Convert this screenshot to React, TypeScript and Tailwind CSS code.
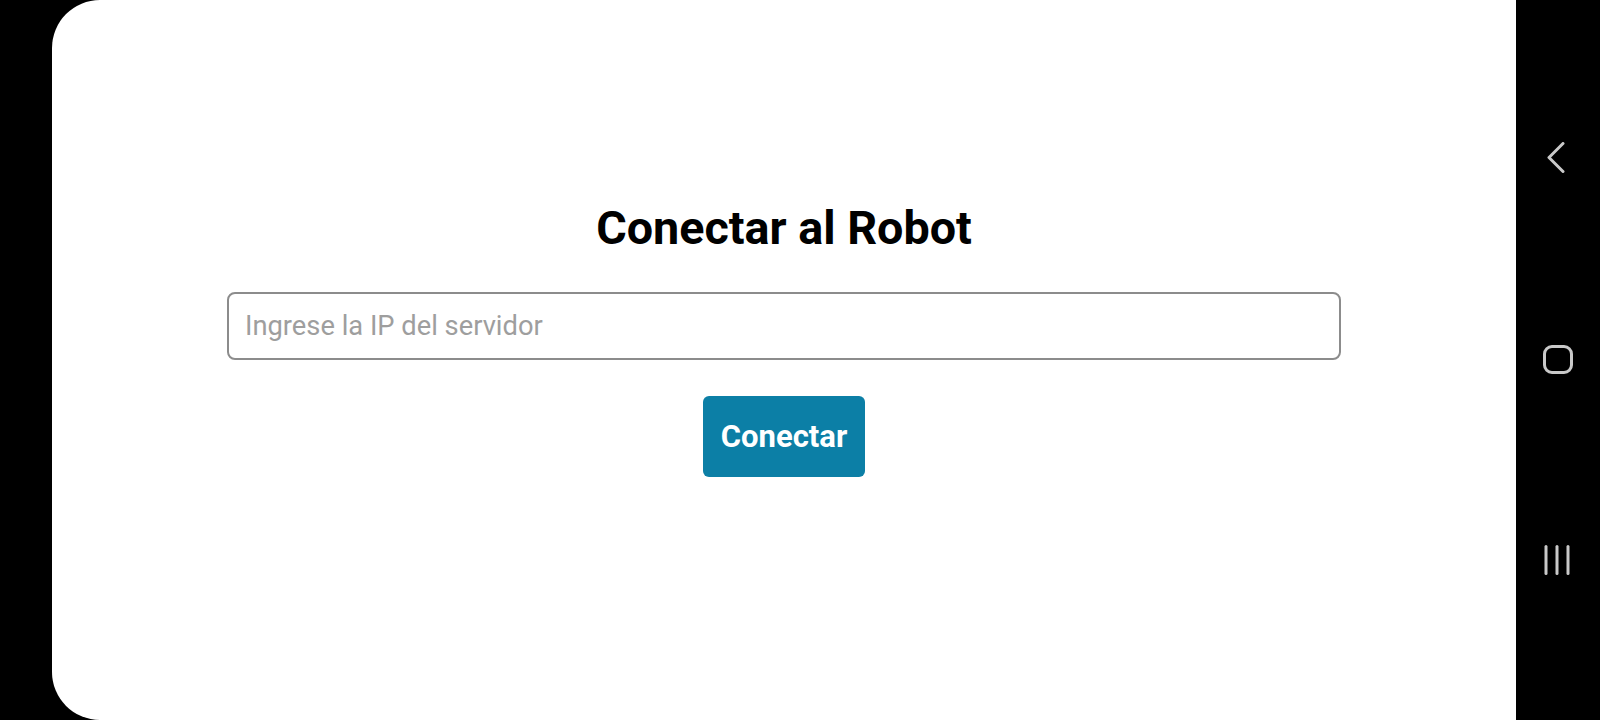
const NavBar = () => {
  return (
    <div className="w-[84px] h-full bg-black flex flex-col items-center pt-[142px]">
      <svg width="18" height="31" viewBox="0 0 18 31" fill="none" className="-ml-[4px]">
        <polyline points="16,1.5 2,15.5 16,29.5" stroke="#c9c9c9" strokeWidth="3" strokeLinecap="round" strokeLinejoin="round" />
      </svg>
      <div className="mt-[172px] w-[30px] h-[29px] border-[3px] border-[#c9c9c9] rounded-[9px]"></div>
      <svg width="28" height="30" viewBox="0 0 28 30" fill="none" className="mt-[171px] -ml-[2px]">
        <line x1="3" y1="1.5" x2="3" y2="28.5" stroke="#c9c9c9" strokeWidth="3" strokeLinecap="round" />
        <line x1="14" y1="1.5" x2="14" y2="28.5" stroke="#c9c9c9" strokeWidth="3" strokeLinecap="round" />
        <line x1="25" y1="1.5" x2="25" y2="28.5" stroke="#c9c9c9" strokeWidth="3" strokeLinecap="round" />
      </svg>
    </div>
  );
};

const App = () => {
  return (
    <div className="w-[1600px] h-[720px] bg-black flex overflow-hidden" style={{ fontFamily: 'Roboto, "Liberation Sans", sans-serif' }}>
      <div className="w-[52px] h-full shrink-0"></div>
      <div className="flex-1 h-full bg-white rounded-l-[48px] flex flex-col items-center pt-[201px]">
        <h1 className="text-[46.7px] leading-[55px] font-bold text-black">Conectar al Robot</h1>
        <input
          type="text"
          placeholder="Ingrese la IP del servidor"
          className="mt-[36px] w-[1114px] h-[68px] border-2 border-[#8c8c8c] rounded-[8px] px-[16px] text-[27.3px] text-black placeholder:text-[#9e9e9e] outline-none"
        />
        <button className="mt-[36px] w-[162px] h-[81px] bg-[#0c7fa6] rounded-[6px] text-white text-[31px] font-bold pt-[2px]">
          Conectar
        </button>
      </div>
      <NavBar />
    </div>
  );
};

export default App;
